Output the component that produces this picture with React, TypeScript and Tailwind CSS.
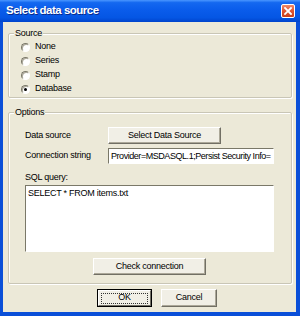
import React from "react";

const sources = ["None", "Series", "Stamp", "Database"];

const Radio = ({ checked }: { checked?: boolean }) => (
  <span className="w-[9px] h-[9px] rounded-full bg-white border border-t-[#7a7868] border-l-[#7a7868] border-r-white border-b-white shadow-[inset_1px_1px_0_#aca899] flex items-center justify-center">
    {checked && <span className="w-[3px] h-[3px] rounded-full bg-black" />}
  </span>
);

const Button = ({ label, className = "" }: { label: string; className?: string }) => (
  <div
    className={`flex items-center justify-center bg-[#f1efe6] border border-t-white border-l-white border-r-[#716f64] border-b-[#716f64] shadow-[inset_-1px_-1px_0_#aca899] ${className}`}
  >
    {label}
  </div>
);

const Group = ({ title, className = "", children }: { title: string; className?: string; children: React.ReactNode }) => (
  <div className={`relative mx-[5px] mr-[4px] border border-[#c9c6b6] rounded-[2px] shadow-[inset_1px_1px_0_#fff,1px_1px_0_#fff] ${className}`}>
    <span className="absolute -top-[7px] left-[5px] px-[1px] bg-[#ece9d8] leading-[12px]">{title}</span>
    {children}
  </div>
);

export default function App() {
  return (
    <div className="w-[300px] h-[316px] flex flex-col bg-[#0a4fd8] font-['Liberation_Sans',Arial,sans-serif] text-[9px] tracking-[-0.25px] text-black">
      <div className="h-[22px] flex items-center justify-between pl-[6px] pr-[5px] bg-[linear-gradient(180deg,#4a96ff_0%,#1468f0_12%,#0a5ceb_45%,#0556e4_80%,#0044cc_100%)]">
        <span className="text-white font-bold text-[11.5px] tracking-[-0.5px] [text-shadow:1px_1px_0_#0a2a8a]">
          Select data source
        </span>
        <div className="w-[14px] h-[14px] rounded-[2px] border border-white bg-[linear-gradient(180deg,#ee8a6a,#e05430_50%,#c8401c)] flex items-center justify-center">
          <svg width="8" height="8" viewBox="0 0 8 8">
            <path d="M1 1L7 7M7 1L1 7" stroke="#fff" strokeWidth="1.8" strokeLinecap="square" />
          </svg>
        </div>
      </div>

      <div className="flex-1 ml-[3px] mr-[4px] mb-[4px] bg-[#ece9d8] flex flex-col pt-[11px]">
        <Group title="Source" className="h-[65px] pt-[6px] pl-[12px]">
          {sources.map((s) => (
            <div key={s} className="h-[14px] flex items-center gap-[5px]">
              <Radio checked={s === "Database"} />
              <span>{s}</span>
            </div>
          ))}
        </Group>

        <Group title="Options" className="mt-[14px] h-[172px] pt-[14px] pl-[16px] pr-[17px] flex flex-col">
          <div className="h-[17px] flex items-center">
            <span className="w-[83px]">Data source</span>
            <Button label="Select Data Source" className="w-[113px] h-[17px]" />
          </div>
          <div className="mt-[4px] h-[16px] flex items-center">
            <span className="w-[83px]">Connection string</span>
            <div className="flex-1 h-[16px] bg-white border border-t-[#7a7868] border-l-[#7a7868] border-r-white border-b-white pl-[2px] leading-[14px] tracking-[-0.45px] whitespace-nowrap overflow-hidden">
              Provider=MSDASQL.1;Persist Security Info=
            </div>
          </div>
          <div className="mt-[7px] h-[12px] leading-[12px]">SQL query:</div>
          <div className="mt-[2px] h-[67px] bg-white border border-t-[#7a7868] border-l-[#7a7868] border-r-white border-b-white px-[2px] pt-[1px] leading-[12px]">
            SELECT * FROM items.txt
          </div>
          <div className="mt-[6px] flex justify-center">
            <Button label="Check connection" className="w-[113px] h-[17px]" />
          </div>
        </Group>

        <div className="mt-[5px] flex gap-[9px] pl-[94px]">
          <div className="w-[55px] h-[18px] border border-black flex">
            <div className="flex-1 flex items-center justify-center bg-[#f1efe6] border border-t-white border-l-white border-r-[#716f64] border-b-[#716f64]">
              <span className="flex-1 mx-[2px] h-[11px] border border-dotted border-[#333] flex items-center justify-center">
                OK
              </span>
            </div>
          </div>
          <Button label="Cancel" className="w-[56px] h-[18px]" />
        </div>
      </div>
    </div>
  );
}
